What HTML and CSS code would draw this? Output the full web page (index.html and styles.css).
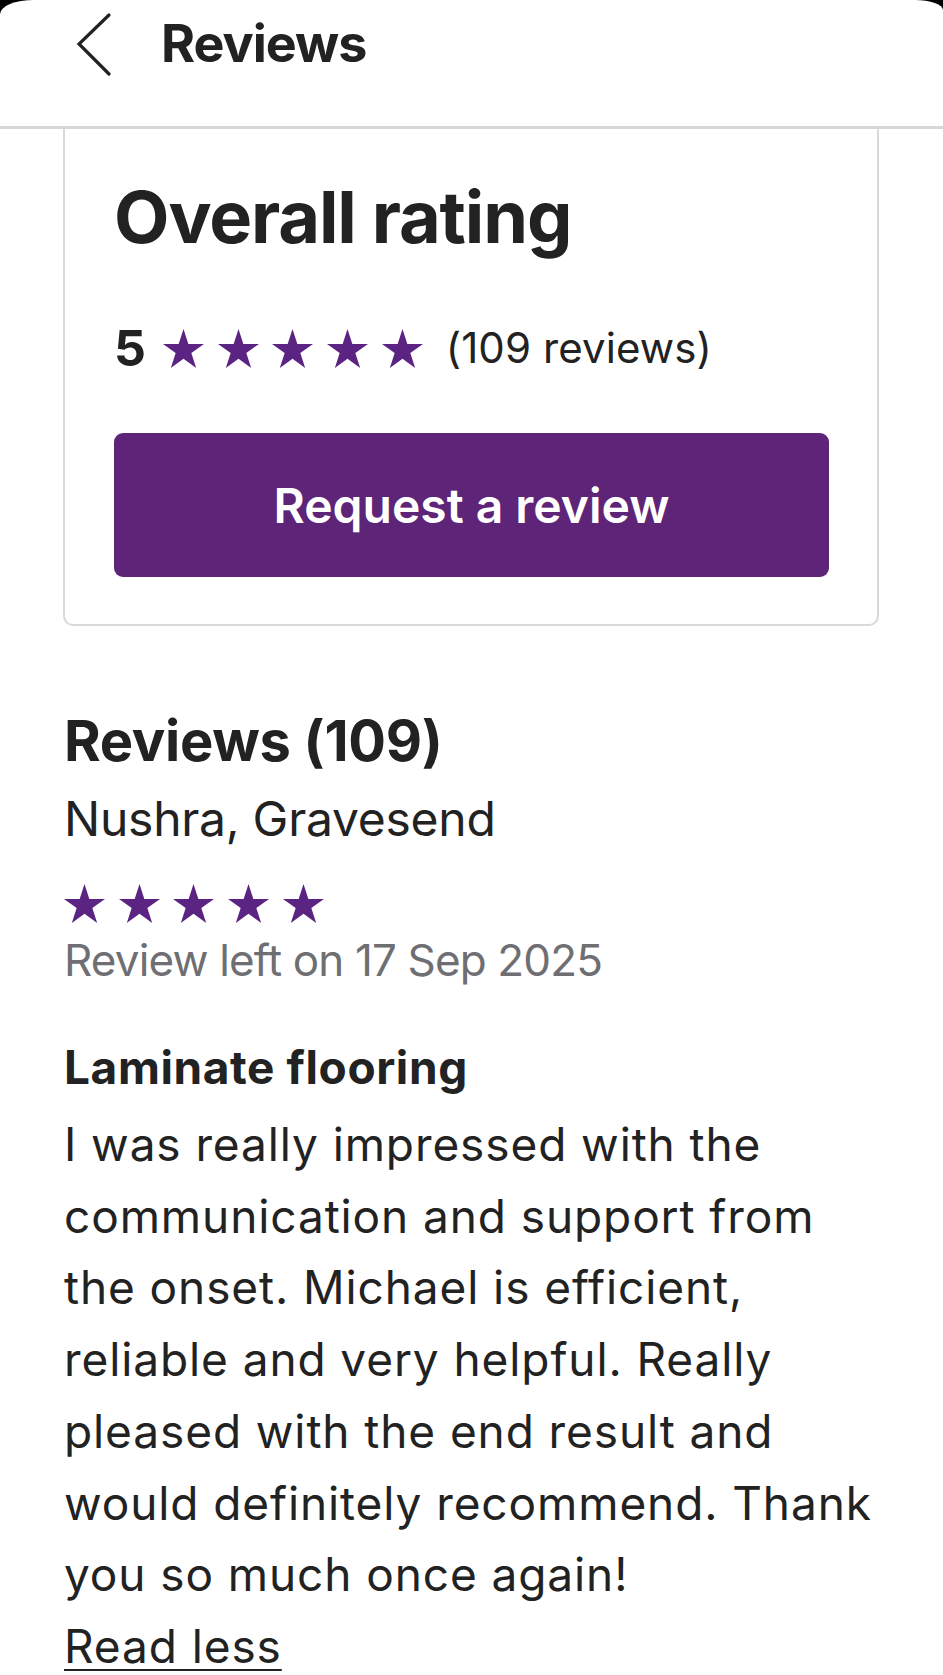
FILE: index.html
```html
<!DOCTYPE html>
<html lang="en">
<head>
<meta charset="utf-8">
<title>Reviews</title>
<link rel="stylesheet" href="styles.css">
</head>
<body>
<div class="screen">
  <header class="topbar">
    <button class="back" aria-label="Back">
      <svg width="36" height="64" viewBox="0 0 36 64"><path d="M33 2 L3 31 L33 61" fill="none" stroke="#222" stroke-width="3.2" stroke-linecap="round" stroke-linejoin="miter"/></svg>
    </button>
    <h1 class="topbar-title">Reviews</h1>
  </header>

  <section class="card">
    <h2 class="card-title">Overall rating</h2>
    <div class="rating-row">
      <span class="rating-num">5</span>
      <span class="stars stars-lg">
        <svg class="star" viewBox="0 0 38.04 36.18"><path d="M19.02 0L23.51 13.82L38.04 13.82L26.29 22.36L30.78 36.18L19.02 27.64L7.26 36.18L11.75 22.36L0 13.82L14.53 13.82Z"/></svg>
        <svg class="star" viewBox="0 0 38.04 36.18"><path d="M19.02 0L23.51 13.82L38.04 13.82L26.29 22.36L30.78 36.18L19.02 27.64L7.26 36.18L11.75 22.36L0 13.82L14.53 13.82Z"/></svg>
        <svg class="star" viewBox="0 0 38.04 36.18"><path d="M19.02 0L23.51 13.82L38.04 13.82L26.29 22.36L30.78 36.18L19.02 27.64L7.26 36.18L11.75 22.36L0 13.82L14.53 13.82Z"/></svg>
        <svg class="star" viewBox="0 0 38.04 36.18"><path d="M19.02 0L23.51 13.82L38.04 13.82L26.29 22.36L30.78 36.18L19.02 27.64L7.26 36.18L11.75 22.36L0 13.82L14.53 13.82Z"/></svg>
        <svg class="star" viewBox="0 0 38.04 36.18"><path d="M19.02 0L23.51 13.82L38.04 13.82L26.29 22.36L30.78 36.18L19.02 27.64L7.26 36.18L11.75 22.36L0 13.82L14.53 13.82Z"/></svg>
      </span>
      <span class="rating-count">(109 reviews)</span>
    </div>
    <button class="btn-primary">Request a review</button>
  </section>

  <section class="reviews">
    <h2 class="reviews-title">Reviews (109)</h2>
    <article class="review">
      <p class="review-author">Nushra, Gravesend</p>
      <div class="stars stars-sm">
        <svg class="star" viewBox="0 0 38.04 36.18"><path d="M19.02 0L23.51 13.82L38.04 13.82L26.29 22.36L30.78 36.18L19.02 27.64L7.26 36.18L11.75 22.36L0 13.82L14.53 13.82Z"/></svg>
        <svg class="star" viewBox="0 0 38.04 36.18"><path d="M19.02 0L23.51 13.82L38.04 13.82L26.29 22.36L30.78 36.18L19.02 27.64L7.26 36.18L11.75 22.36L0 13.82L14.53 13.82Z"/></svg>
        <svg class="star" viewBox="0 0 38.04 36.18"><path d="M19.02 0L23.51 13.82L38.04 13.82L26.29 22.36L30.78 36.18L19.02 27.64L7.26 36.18L11.75 22.36L0 13.82L14.53 13.82Z"/></svg>
        <svg class="star" viewBox="0 0 38.04 36.18"><path d="M19.02 0L23.51 13.82L38.04 13.82L26.29 22.36L30.78 36.18L19.02 27.64L7.26 36.18L11.75 22.36L0 13.82L14.53 13.82Z"/></svg>
        <svg class="star" viewBox="0 0 38.04 36.18"><path d="M19.02 0L23.51 13.82L38.04 13.82L26.29 22.36L30.78 36.18L19.02 27.64L7.26 36.18L11.75 22.36L0 13.82L14.53 13.82Z"/></svg>
      </div>
      <p class="review-date">Review left on 17 Sep 2025</p>
      <h3 class="review-job">Laminate flooring</h3>
      <p class="review-body">I was really impressed with the<br>communication and support from<br>the onset. Michael is efficient,<br>reliable and very helpful. Really<br>pleased with the end result and<br>would definitely recommend. Thank<br>you so much once again!</p>
      <a class="read-less" href="#">Read less</a>
    </article>
  </section>
</div>
</body>
</html>
```

FILE: styles.css
```css
* { box-sizing: border-box; }

html, body {
  margin: 0;
  padding: 0;
  background: #000;
}

.screen {
  width: 943px;
  min-height: 1675px;
  background: #fff;
  border-top-left-radius: 34px 14px;
  border-top-right-radius: 28px 10px;
  overflow: hidden;
  font-family: "Inter", "Noto Sans", sans-serif;
  color: #222;
}

.topbar {
  height: 129px;
  border-bottom: 3px solid #d7d7d9;
  display: flex;
  align-items: flex-start;
  padding: 13px 0 0 76px;
}

.back {
  border: 0;
  background: none;
  padding: 0;
  margin: 0;
  width: 36px;
  height: 64px;
  display: block;
}
.back svg { display: block; }

.topbar-title {
  margin: 0 0 0 49px;
  font-size: 52px;
  line-height: 62px;
  font-weight: 700;
  letter-spacing: -1px;
  color: #222;
}

.card {
  margin: 0 64px 0 63px;
  border: 2px solid #d9d9db;
  border-top: 0;
  border-radius: 0 0 10px 10px;
  padding: 44px 48px 47px 49px;
  display: flex;
  flex-direction: column;
}

.card-title {
  margin: 0;
  font-size: 72px;
  line-height: 88px;
  font-weight: 700;
  letter-spacing: -1.1px;
  color: #222;
}

.rating-row {
  margin-top: 62px;
  height: 50px;
  display: flex;
  align-items: center;
}

.rating-num {
  font-size: 50px;
  font-weight: 700;
  line-height: 50px;
}

.stars {
  display: flex;
  gap: 13.7px;
}
.star {
  width: 41px;
  height: 39px;
  fill: #5b2482;
  display: block;
}
.stars-lg { margin-left: 17px; }

.rating-count {
  margin-left: 23px;
  font-size: 42px;
  line-height: 50px;
  font-weight: 400;
  letter-spacing: 0.1px;
}

.btn-primary {
  margin-top: 60px;
  height: 144px;
  width: 100%;
  border: 0;
  border-radius: 9px;
  background: #5e2477;
  color: #fff;
  font-family: inherit;
  font-size: 48px;
  font-weight: 600;
  letter-spacing: 0;
}

.reviews {
  padding: 81px 64px 0 64px;
}

.reviews-title {
  margin: 0;
  font-size: 56px;
  line-height: 68px;
  font-weight: 700;
  letter-spacing: -0.3px;
}

.review-author {
  margin: 14px 0 0;
  font-size: 48px;
  line-height: 60px;
  letter-spacing: -0.25px;
}

.stars-sm {
  margin-top: 35px;
}

.review-date {
  margin: 11px 0 0;
  font-size: 44px;
  line-height: 52px;
  letter-spacing: -0.85px;
  color: #6f6f73;
}

.review-job {
  margin: 55px 0 0;
  font-size: 46px;
  line-height: 52px;
  font-weight: 700;
  letter-spacing: 0.6px;
}

.review-body {
  margin: 16px 0 0;
  font-size: 46px;
  line-height: 71.7px;
  letter-spacing: 0.9px;
}

.read-less {
  display: inline-block;
  font-size: 46px;
  line-height: 71.7px;
  letter-spacing: 0.9px;
  color: #222;
  text-decoration: underline;
  text-decoration-thickness: 2px;
  text-underline-offset: 6px;
}
```
